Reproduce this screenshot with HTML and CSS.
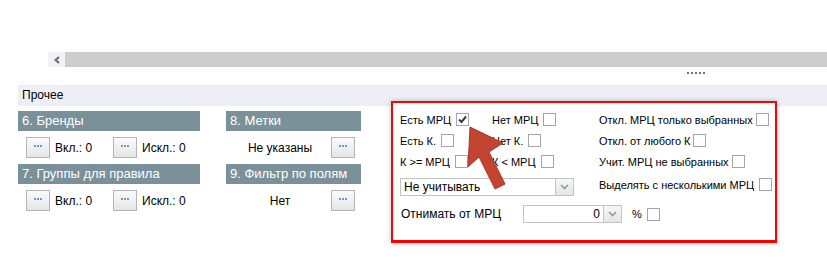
FILE: index.html
```
<!DOCTYPE html>
<html>
<head>
    <title>Прочее</title>
    <link rel="stylesheet" href="styles.css">
</head>
<body>
    <div class="hscroll">
        <div class="hscroll-btn">
            <svg width="8" height="8" viewBox="0 0 8 8"><path d="M6 1 L2.5 4 L6 7" fill="none" stroke="#6b6b6b" stroke-width="2"/></svg>
        </div>
        <div class="hscroll-track"></div>
    </div>
    <div class="grip-row">
        <span class="grip"><i></i><i></i><i></i><i></i><i></i></span>
    </div>

    <div class="section-bar">Прочее</div>

    <div class="content">
        <div class="groups">
            <div class="group">
                <div class="group-title">6. Бренды</div>
                <div class="group-row">
                    <span class="pick"><button class="dots-btn"><i></i><i></i><i></i></button>Вкл.: 0</span>
                    <span class="pick"><button class="dots-btn"><i></i><i></i><i></i></button>Искл.: 0</span>
                </div>
            </div>
            <div class="group">
                <div class="group-title">8. Метки</div>
                <div class="group-row single">
                    <span class="value">Не указаны</span>
                    <button class="dots-btn"><i></i><i></i><i></i></button>
                </div>
            </div>
            <div class="group">
                <div class="group-title">7. Группы для правила</div>
                <div class="group-row">
                    <span class="pick"><button class="dots-btn"><i></i><i></i><i></i></button>Вкл.: 0</span>
                    <span class="pick"><button class="dots-btn"><i></i><i></i><i></i></button>Искл.: 0</span>
                </div>
            </div>
            <div class="group">
                <div class="group-title">9. Фильтр по полям</div>
                <div class="group-row single">
                    <span class="value">Нет</span>
                    <button class="dots-btn"><i></i><i></i><i></i></button>
                </div>
            </div>
        </div>

        <div class="mrc-panel">
            <div class="mrc-top">
                <div class="mrc-left">
                    <div class="check-grid">
                        <label class="chk">Есть МРЦ <span class="box checked"><svg width="11" height="11" viewBox="0 0 11 11"><path d="M2 5.5 L4.5 8 L9 2.5" fill="none" stroke="#3a3a3a" stroke-width="2"/></svg></span></label>
                        <label class="chk">Нет МРЦ <span class="box"></span></label>
                        <label class="chk">Есть К. <span class="box"></span></label>
                        <label class="chk">Нет К. <span class="box"></span></label>
                        <label class="chk">К &gt;= МРЦ <span class="box"></span></label>
                        <label class="chk">К &lt; МРЦ <span class="box"></span></label>
                    </div>
                    <div class="combo wide-combo">
                        <span class="combo-text">Не учитывать</span>
                        <span class="combo-btn"><svg width="9" height="6" viewBox="0 0 9 6"><path d="M1 1 L4.5 4.5 L8 1" fill="none" stroke="#8a98a8" stroke-width="1.6"/></svg></span>
                    </div>
                </div>
                <div class="mrc-right">
                    <label class="chk">Откл. МРЦ только выбранных <span class="box"></span></label>
                    <label class="chk">Откл. от любого К <span class="box"></span></label>
                    <label class="chk">Учит. МРЦ не выбранных <span class="box"></span></label>
                    <label class="chk last">Выделять с несколькими МРЦ <span class="box"></span></label>
                </div>
            </div>
            <div class="mrc-bottom">
                <span class="sub-label">Отнимать от МРЦ</span>
                <div class="combo num-combo">
                    <span class="combo-text num">0</span>
                    <span class="combo-btn"><svg width="9" height="6" viewBox="0 0 9 6"><path d="M1 1 L4.5 4.5 L8 1" fill="none" stroke="#8a98a8" stroke-width="1.6"/></svg></span>
                </div>
                <label class="chk pct">% <span class="box"></span></label>
            </div>
        </div>
    </div>

    <svg class="callout" width="827" height="262" viewBox="0 0 827 262">
        <polygon points="470,127 503,143 489,152 505,184 495,189 479,157 468,167" fill="#c2432f" stroke="#a8382a" stroke-width="1"/>
    </svg>
</body>
</html>
```

FILE: styles.css
```
body {
    margin: 0;
    background-color: #fff;
    font-family: "Liberation Sans", Arial, sans-serif;
    font-size: 12px;
    color: #000;
    width: 827px;
    height: 262px;
    overflow: hidden;
    position: relative;
}

.hscroll {
    display: flex;
    margin: 52px 0 0 48px;
    height: 15px;
}

.hscroll-btn {
    width: 17px;
    background-color: #f4f2f6;
    display: flex;
    align-items: center;
    justify-content: center;
}

.hscroll-track {
    flex: 1;
    background-color: #cdcdcd;
}

.grip-row {
    height: 18px;
    position: relative;
}

.grip {
    display: flex;
    gap: 2px;
    margin-left: 687px;
    padding-top: 5px;
}

.grip i {
    width: 2px;
    height: 2px;
    background-color: #707070;
}

.section-bar {
    margin-left: 18px;
    height: 21px;
    line-height: 21px;
    padding-left: 4px;
    background-color: #eeeef6;
}

.content {
    display: flex;
    align-items: flex-start;
}

.groups {
    display: grid;
    grid-template-columns: 182px 135px;
    column-gap: 26px;
    margin: 5px 0 0 18px;
}

.group-title {
    height: 20px;
    line-height: 20px;
    padding-left: 4px;
    background-color: #7b9199;
    color: #fff;
    font-size: 13px;
}

.group-row {
    display: flex;
    align-items: center;
    height: 21px;
    margin: 6px 0;
    padding-left: 8px;
}

.group-row.single {
    padding-left: 0;
}

.pick {
    display: flex;
    align-items: center;
    gap: 5px;
    width: 88px;
}

.value {
    flex: 1;
    text-align: center;
    padding-left: 8px;
}

.dots-btn {
    width: 24px;
    height: 21px;
    padding: 7px 0 0;
    border: 1px solid #b4b4b4;
    background: linear-gradient(#fafafa, #e6e6e6);
    display: flex;
    justify-content: center;
    align-items: flex-start;
    gap: 1px;
    box-sizing: border-box;
}

.group-row.single .dots-btn {
    margin: 0 6px 0 5px;
}

.dots-btn i {
    width: 2px;
    height: 2px;
    background-color: #6f9ac4;
}

.mrc-panel {
    margin: -5px 0 0 30px;
    width: 386px;
    height: 142px;
    box-sizing: border-box;
    border: 2px solid #f00;
    border-bottom-width: 3px;
    background-color: #fff;
    box-shadow: 0 0 5px rgba(0, 0, 0, 0.25);
    padding: 6px 0 0 7px;
    font-size: 11px;
}

.mrc-top {
    display: flex;
}

.mrc-left {
    width: 199px;
}

.check-grid {
    display: grid;
    grid-template-columns: 92px auto;
    grid-auto-rows: 21px;
}

.chk {
    display: flex;
    align-items: center;
    gap: 5px;
    white-space: nowrap;
}

.box {
    width: 13px;
    height: 13px;
    box-sizing: border-box;
    border: 1px solid #a5a5a5;
    background-color: #fff;
    display: flex;
    align-items: center;
    justify-content: center;
}

.mrc-right .chk {
    height: 21px;
    gap: 3px;
}

.mrc-right .chk.last {
    margin-top: 2px;
    gap: 5px;
}

.combo {
    display: flex;
    height: 18px;
    box-sizing: border-box;
    border: 1px solid #c3c3c3;
    font-size: 12px;
}

.wide-combo {
    width: 174px;
    margin-top: 6px;
}

.combo-text {
    flex: 1;
    line-height: 16px;
    padding-left: 3px;
}

.combo-text.num {
    text-align: right;
    padding-right: 3px;
}

.combo-btn {
    width: 17px;
    border-left: 1px solid #c3c3c3;
    background: linear-gradient(#f7f7f7, #e5e5e5);
    display: flex;
    align-items: center;
    justify-content: center;
}

.mrc-bottom {
    display: flex;
    align-items: center;
    margin-top: 9px;
    height: 18px;
}

.sub-label {
    width: 122px;
    font-size: 12px;
    padding-left: 1px;
}

.num-combo {
    width: 99px;
}

.chk.pct {
    margin-left: 10px;
    gap: 5px;
}

.callout {
    position: absolute;
    left: 0;
    top: 0;
    pointer-events: none;
}
```
